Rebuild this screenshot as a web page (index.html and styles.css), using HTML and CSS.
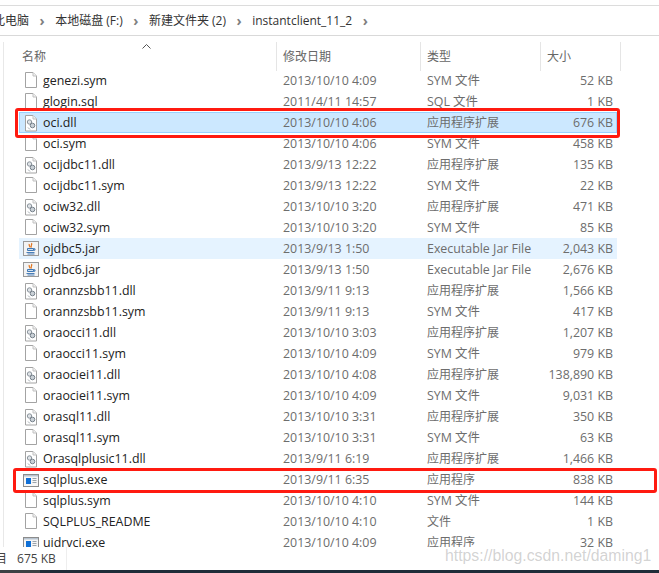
FILE: index.html
```html
<!DOCTYPE html>
<html lang="zh">
<head>
<meta charset="utf-8">
<title>instantclient_11_2</title>
<link rel="stylesheet" href="styles.css">
</head>
<body>
<svg class="defs" width="0" height="0" aria-hidden="true">
<symbol id="doc" viewBox="0 0 16 18"><path d="M2.500 .5h7.500l3.500 3.500v11.500h-11z" fill="#fff" stroke="#a3a3a3"/><path d="M10 .5v3.500h3.500" fill="#f2f2f2" stroke="#c0c0c0"/></symbol>
<symbol id="dll" viewBox="0 0 16 18"><path d="M2.500 1.500h7.500l3.500 3.500v12h-11z" fill="#fff" stroke="#a3a3a3"/><path d="M10 1.500v3.500h3.500" fill="#f2f2f2" stroke="#c0c0c0"/><circle cx="6.500" cy="8" r="2.200" fill="#dfe3e7" stroke="#8b949c"/><circle cx="9.500" cy="11.500" r="2.300" fill="#c9d0d6" stroke="#76818b"/><path d="M5 13.500l2 2" stroke="#a3abb2"/></symbol>
<symbol id="jar" viewBox="0 0 16 18"><rect x=".5" y="1.500" width="15" height="14" fill="#f3f3f3" stroke="#9a9a9a"/><path d="M8.500 3c1.200 1.500-1.500 2.500 0 4.500M6.300 4c-.8 1.500.8 2.300.8 3.500" fill="none" stroke="#e0731c" stroke-width="1.200"/><path d="M4.500 8.500h6v2h-6zM10.500 8.800h1.500v1.400h-1.500" fill="#cfe0f0" stroke="#3f78b5"/><path d="M3.500 12.500h8M4.500 14h7" stroke="#4a7fb8"/></symbol>
<symbol id="exe" viewBox="0 0 16 18"><rect x=".5" y="3.500" width="15" height="12" fill="#f6f6f6" stroke="#8c8c8c"/><rect x="1" y="4" width="14" height="1.500" fill="#b8c4d0"/><rect x="3" y="7" width="5" height="6" fill="#0f6fd6"/><path d="M9.500 7.500h4M9.500 9.500h4M9.500 11.500h4" stroke="#9aa3ab"/></symbol>
</svg>
<main class="window">
  <nav class="address">
    <span class="crumb crumb-first">此电脑</span><span class="chev">›</span>
    <span class="crumb">本地磁盘 (F:)</span><span class="chev">›</span>
    <span class="crumb">新建文件夹 (2)</span><span class="chev">›</span>
    <span class="crumb">instantclient_11_2</span><span class="chev">›</span>
  </nav>
  <section class="pane">
    <div class="caret"><svg width="9" height="5" viewBox="0 0 9 5"><path d="M.5 4.500l4-4 4 4" fill="none" stroke="#555"/></svg></div>
    <header class="head">
      <span class="hname">名称</span><span class="hcell">修改日期</span><span class="hcell">类型</span><span class="hcell">大小</span>
    </header>
    <div class="list">
      <div class="row"><svg class="ic"><use href="#doc"/></svg><span class="n">genezi.sym</span><span>2013/10/10 4:09</span><span>SYM 文件</span><span class="s">52 KB</span></div>
      <div class="row"><svg class="ic"><use href="#doc"/></svg><span class="n">glogin.sql</span><span>2011/4/11 14:57</span><span>SQL 文件</span><span class="s">1 KB</span></div>
      <div class="row sel"><svg class="ic"><use href="#dll"/></svg><span class="n">oci.dll</span><span>2013/10/10 4:06</span><span class="z">应用程序扩展</span><span class="s">676 KB</span></div>
      <div class="row"><svg class="ic"><use href="#doc"/></svg><span class="n">oci.sym</span><span>2013/10/10 4:06</span><span>SYM 文件</span><span class="s">458 KB</span></div>
      <div class="row"><svg class="ic"><use href="#dll"/></svg><span class="n">ocijdbc11.dll</span><span>2013/9/13 12:22</span><span class="z">应用程序扩展</span><span class="s">135 KB</span></div>
      <div class="row"><svg class="ic"><use href="#doc"/></svg><span class="n">ocijdbc11.sym</span><span>2013/9/13 12:22</span><span>SYM 文件</span><span class="s">22 KB</span></div>
      <div class="row"><svg class="ic"><use href="#dll"/></svg><span class="n">ociw32.dll</span><span>2013/10/10 3:20</span><span class="z">应用程序扩展</span><span class="s">471 KB</span></div>
      <div class="row"><svg class="ic"><use href="#doc"/></svg><span class="n">ociw32.sym</span><span>2013/10/10 3:20</span><span>SYM 文件</span><span class="s">85 KB</span></div>
      <div class="row hov"><svg class="ic"><use href="#jar"/></svg><span class="n">ojdbc5.jar</span><span>2013/9/13 1:50</span><span>Executable Jar File</span><span class="s">2,043 KB</span></div>
      <div class="row"><svg class="ic"><use href="#jar"/></svg><span class="n">ojdbc6.jar</span><span>2013/9/13 1:50</span><span>Executable Jar File</span><span class="s">2,676 KB</span></div>
      <div class="row"><svg class="ic"><use href="#dll"/></svg><span class="n">orannzsbb11.dll</span><span>2013/9/11 9:13</span><span class="z">应用程序扩展</span><span class="s">1,566 KB</span></div>
      <div class="row"><svg class="ic"><use href="#doc"/></svg><span class="n">orannzsbb11.sym</span><span>2013/9/11 9:13</span><span>SYM 文件</span><span class="s">417 KB</span></div>
      <div class="row"><svg class="ic"><use href="#dll"/></svg><span class="n">oraocci11.dll</span><span>2013/10/10 3:03</span><span class="z">应用程序扩展</span><span class="s">1,207 KB</span></div>
      <div class="row"><svg class="ic"><use href="#doc"/></svg><span class="n">oraocci11.sym</span><span>2013/10/10 4:09</span><span>SYM 文件</span><span class="s">979 KB</span></div>
      <div class="row"><svg class="ic"><use href="#dll"/></svg><span class="n">oraociei11.dll</span><span>2013/10/10 4:08</span><span class="z">应用程序扩展</span><span class="s">138,890 KB</span></div>
      <div class="row"><svg class="ic"><use href="#doc"/></svg><span class="n">oraociei11.sym</span><span>2013/10/10 4:09</span><span>SYM 文件</span><span class="s">9,031 KB</span></div>
      <div class="row"><svg class="ic"><use href="#dll"/></svg><span class="n">orasql11.dll</span><span>2013/10/10 3:31</span><span class="z">应用程序扩展</span><span class="s">350 KB</span></div>
      <div class="row"><svg class="ic"><use href="#doc"/></svg><span class="n">orasql11.sym</span><span>2013/10/10 3:31</span><span>SYM 文件</span><span class="s">63 KB</span></div>
      <div class="row"><svg class="ic"><use href="#dll"/></svg><span class="n">Orasqlplusic11.dll</span><span>2013/9/11 6:19</span><span class="z">应用程序扩展</span><span class="s">1,466 KB</span></div>
      <div class="row"><svg class="ic"><use href="#exe"/></svg><span class="n">sqlplus.exe</span><span>2013/9/11 6:35</span><span class="z">应用程序</span><span class="s">838 KB</span></div>
      <div class="row"><svg class="ic"><use href="#doc"/></svg><span class="n">sqlplus.sym</span><span>2013/10/10 4:10</span><span>SYM 文件</span><span class="s">144 KB</span></div>
      <div class="row"><svg class="ic"><use href="#doc"/></svg><span class="n">SQLPLUS_README</span><span>2013/10/10 4:10</span><span class="z">文件</span><span class="s">1 KB</span></div>
      <div class="row"><svg class="ic"><use href="#exe"/></svg><span class="n">uidrvci.exe</span><span>2013/10/10 4:09</span><span class="z">应用程序</span><span class="s">32 KB</span></div>
    </div>
  </section>
  <footer class="status"><span class="items">目</span><span class="selsize">675 KB</span></footer>
  <div class="taskbar"></div>
  <div class="mark mark-a"></div>
  <div class="mark mark-b"></div>
  <div class="watermark">https://blog.csdn.net/daming1</div>
</main>
</body>
</html>
```
FILE: styles.css
```css
* { box-sizing: border-box; }
html, body { margin: 0; height: 100%; background: #fff; }
body { overflow: hidden; }
.defs { position: absolute; }
.window {
  position: relative; width: 659px; height: 573px; overflow: hidden;
  display: flex; flex-direction: column; background: #fff;
  font: 12px/21px "Open Sans", "Noto Sans CJK SC", sans-serif; color: #6d6d6d;
}
.address {
  flex: none; height: 31px; margin-top: 5px;
  border-top: 1px solid #dcdcdc; border-bottom: 1px solid #d9d9d9;
  display: flex; align-items: center; color: #333; white-space: nowrap;
}
.crumb-first { margin-left: -7px; }
.chev { flex: none; width: 26.2px; text-align: center; color: #808080; font-size: 14px; line-height: 18px; font-weight: 700; }
.pane { flex: 1; min-height: 0; margin: 6px 0 0 3px; border-left: 1px solid #e8e8e8; position: relative; display: flex; flex-direction: column; overflow: hidden; }
.caret { position: absolute; left: 138px; top: 0; line-height: 5px; }
.head { flex: none; height: 27px; display: grid; grid-template-columns: 255px 144px 120px 80px; padding-left: 18px; line-height: 29px; }
.head span { padding-left: 6px; border-right: 1px solid #e5e5e5; color: #666; }
.head .hname { padding-left: 0; }
.list { flex: 1; min-height: 0; overflow: hidden; padding-top: 1px; }
.row { height: 21px; width: 598px; margin-left: 15px; display: grid; grid-template-columns: 24px 240px 144px 120px 66px; align-items: center; font-size: 12.4px; }
.row > span { white-space: nowrap; }
.row .z { font-size: 12px; }
.ic { width: 16px; height: 18px; margin-left: 4px; }
.n { color: #222; }
.s { text-align: right; }
.sel { background: #cce8ff; box-shadow: inset 0 0 0 1px #99d1ff; }
.hov { background: #e5f3ff; }
.status { flex: none; height: 23px; display: flex; align-items: center; gap: 10px; color: #444; line-height: 23px; }
.items { margin-left: -5px; }
.selsize { border-right: 1px solid #eee; padding-right: 10px; }
.taskbar { flex: none; height: 3px; background: linear-gradient(90deg, #3c4144 40px, #1f2d39 40px); }
.mark { position: absolute; border: 3px solid #ff1a10; border-radius: 3px; pointer-events: none; }
.mark-a { left: 15px; top: 108px; width: 605px; height: 30px; }
.mark-b { left: 13px; top: 468px; width: 644px; height: 25px; }
.watermark { position: absolute; left: 445px; top: 545px; font: 15.8px/22px "Liberation Sans", sans-serif; color: rgba(130,130,130,.36); white-space: nowrap; }
```
